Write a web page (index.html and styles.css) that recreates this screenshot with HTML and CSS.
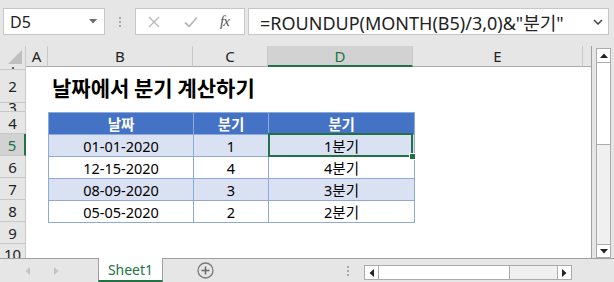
FILE: index.html
```html
<!DOCTYPE html>
<html>
<head>
  <meta charset="utf-8">
  <title>날짜에서 분기 계산하기</title>
  <link rel="stylesheet" href="styles.css">
</head>
<body>
<div class="app">

  <div class="fbar">
    <div class="namebox">
      <span>D5</span>
      <svg class="caret" width="8" height="5" viewBox="0 0 8 5"><path d="M0 0H8L4 4.5Z" fill="#6b6b6b"/></svg>
    </div>
    <div class="grip"><i></i><i></i><i></i></div>
    <div class="fxbox">
      <svg width="12" height="12" viewBox="0 0 12 12"><path d="M1 1L11 11M11 1L1 11" stroke="#b8b8b8" stroke-width="1.4"/></svg>
      <svg width="14" height="12" viewBox="0 0 14 12"><path d="M1 6.5L5 10.5L13 1.5" stroke="#b8b8b8" stroke-width="1.8" fill="none"/></svg>
      <span class="fx">fx</span>
    </div>
    <div class="formula">
      <span>=ROUNDUP(MONTH(B5)/3,0)&amp;"분기"</span>
      <svg width="10" height="6" viewBox="0 0 10 6"><path d="M1 1L5 5L9 1" stroke="#444" stroke-width="1.5" fill="none"/></svg>
    </div>
  </div>

  <div class="main">
    <div class="sheet">
      <div class="corner"><span class="tri"></span></div>
      <div class="colhead">A</div>
      <div class="colhead">B</div>
      <div class="colhead">C</div>
      <div class="colhead sel">D</div>
      <div class="colhead">E</div>
      <div class="colhead rest"></div>

      <div class="rowhead"><span>1</span></div>
      <div class="rowhead"><span>2</span></div>
      <div class="rowhead"><span>3</span></div>
      <div class="rowhead"><span>4</span></div>
      <div class="rowhead sel"><span>5</span></div>
      <div class="rowhead"><span>6</span></div>
      <div class="rowhead"><span>7</span></div>
      <div class="rowhead"><span>8</span></div>
      <div class="rowhead"><span>9</span></div>
      <div class="rowhead last"><span>10</span></div>

      <div class="canvas"></div>
      <div class="title">날짜에서 분기 계산하기</div>

      <table class="data">
        <colgroup><col class="c-date"><col class="c-q"><col class="c-res"></colgroup>
        <tr class="head"><td>날짜</td><td>분기</td><td>분기</td></tr>
        <tr class="band"><td>01-01-2020</td><td>1</td><td>1분기</td></tr>
        <tr><td>12-15-2020</td><td>4</td><td>4분기</td></tr>
        <tr class="band"><td>08-09-2020</td><td>3</td><td>3분기</td></tr>
        <tr><td>05-05-2020</td><td>2</td><td>2분기</td></tr>
      </table>

      <div class="cursor"></div>
    </div>

    <div class="vscroll">
      <div class="sbtn"><svg width="8" height="5" viewBox="0 0 8 5"><path d="M0 5H8L4 0.5Z" fill="#222"/></svg></div>
      <div class="vthumb"></div>
      <div class="track"></div>
      <div class="sbtn"><svg width="8" height="5" viewBox="0 0 8 5"><path d="M0 0H8L4 4.5Z" fill="#222"/></svg></div>
    </div>
  </div>

  <div class="tabbar">
    <div class="navs">
      <svg width="5" height="8" viewBox="0 0 5 8"><path d="M5 0V8L0.5 4Z" fill="#c4c4c4"/></svg>
      <svg width="5" height="8" viewBox="0 0 5 8"><path d="M0 0V8L4.5 4Z" fill="#c4c4c4"/></svg>
    </div>
    <div class="tab">Sheet1</div>
    <div class="addsheet">
      <svg width="17" height="17" viewBox="0 0 17 17"><circle cx="8.5" cy="8.5" r="7.5" stroke="#7a7a7a" stroke-width="1.3" fill="none"/><path d="M8.5 4.5V12.5M4.5 8.5H12.5" stroke="#6a6a6a" stroke-width="1.5"/></svg>
    </div>
    <div class="hgrip"><i></i><i></i><i></i></div>
    <div class="hscroll">
      <div class="sbtn"><svg width="5" height="8" viewBox="0 0 5 8"><path d="M5 0V8L0.5 4Z" fill="#222"/></svg></div>
      <div class="hthumb"></div>
      <div class="track"></div>
      <div class="sbtn"><svg width="5" height="8" viewBox="0 0 5 8"><path d="M0 0V8L4.5 4Z" fill="#222"/></svg></div>
    </div>
  </div>

</div>
</body>
</html>
```

FILE: styles.css
```css
body{
      margin: 0;
      font-family: "Noto Sans", "Noto Sans CJK KR", sans-serif;
      color: #000;
}
.app{
      width: 614px;
      height: 282px;
      background: #e6e6e6;
      display: flex;
      flex-direction: column;
      overflow: hidden;
}

/* formula bar */
.fbar{
      height: 46px;
      box-sizing: border-box;
      padding: 8px 5px 0 3px;
      display: flex;
      align-items: flex-start;
}
.fbar > div{height: 27px; box-sizing: border-box;}
.namebox{
      width: 102px;
      background: #fff;
      border: 1px solid #c6c6c6;
      display: flex;
      align-items: center;
      justify-content: space-between;
      padding: 0 7px 0 6px;
      font-size: 16px;
      color: #222;
}
.grip{
      width: 30px;
      display: flex;
      flex-direction: column;
      align-items: center;
      justify-content: center;
      gap: 2px;
}
.grip i, .hgrip i{display: block; width: 2px; height: 2px; background: #a8a8a8;}
.fxbox{
      width: 110px;
      background: #fff;
      border: 1px solid #c6c6c6;
      display: flex;
      align-items: center;
      padding-left: 12px;
      gap: 24px;
}
.fx{
      font-family: "Liberation Serif", serif;
      font-style: italic;
      font-size: 15px;
      color: #555;
      letter-spacing: -1px;
      margin-left: -2px;
}
.formula{
      flex: 1;
      margin-left: 3px;
      background: #fff;
      border: 1px solid #c6c6c6;
      display: flex;
      align-items: center;
      justify-content: space-between;
      padding: 0 5px 0 11px;
      font-size: 18px;
      color: #222;
}

/* sheet */
.main{display: flex; height: 212px;}
.sheet{
      width: 592px;
      display: grid;
      grid-template-columns: 26px 22px 145px 75px 145px 170px 9px;
      grid-template-rows: 21px 3px 33px 9px 22px 22px 22px 22px 22px 22px 14px;
      font-size: 14.5px;
}
.corner{
      grid-area: 1 / 1;
      border-right: 1px solid #c8c8c8;
      position: relative;
}
.tri{
      position: absolute;
      right: 3px;
      bottom: 3px;
      width: 0;
      height: 0;
      border-left: 14px solid transparent;
      border-bottom: 14px solid #bfbfbf;
}
.colhead{
      grid-row: 1;
      display: flex;
      align-items: center;
      justify-content: center;
      border-right: 1px solid #c8c8c8;
      border-bottom: 1px solid #ababab;
      font-size: 15px;
      color: #222;
}
.colhead.sel{background: #d2d2d2; color: #217346; border-bottom: 2px solid #217346;}
.colhead.rest{border-right: 1px solid #a0a0a0;}
.rowhead{
      grid-column: 1;
      border-bottom: 1px solid #c8c8c8;
      border-right: 1px solid #c8c8c8;
      overflow: hidden;
      display: flex;
      align-items: center;
      justify-content: center;
      font-size: 15px;
      color: #222;
}
.rowhead.sel{background: #d2d2d2; color: #217346; border-right: 2px solid #217346;}
.rowhead.last{border-bottom: none; align-items: flex-start;}
.canvas{
      grid-column: 2 / 8;
      grid-row: 2 / 12;
      background: #fff;
      border-right: 1px solid #a0a0a0;
}
.title{
      grid-column: 3 / 7;
      grid-row: 3;
      align-self: center;
      padding: 0 0 0 4px;
      font-family: "Noto Sans CJK KR", sans-serif;
      font-weight: bold;
      font-size: 21px;
}

.data{
      grid-column: 3 / 6;
      grid-row: 5 / 10;
      width: 366px;
      border-collapse: collapse;
      table-layout: fixed;
      align-self: start;
}
.c-date{width: 145px;}
.c-q{width: 75px;}
.c-res{width: 146px;}
.data td{
      height: 21px;
      padding: 0;
      border: 1px solid #8eaadb;
      text-align: center;
      line-height: 20px;
}
.data .head td{background: #4472c4; color: #fff; font-weight: bold; font-family: "Noto Sans CJK KR", sans-serif;}
.data .band td{background: #d9e1f2;}
.cursor{
      grid-column: 5;
      grid-row: 6;
      margin: -1px 0 -1px 0;
      border: 2px solid #217346;
      position: relative;
}
.cursor::after{
      content: "";
      position: absolute;
      right: -5px;
      bottom: -5px;
      width: 5px;
      height: 5px;
      background: #217346;
      border: 1px solid #fff;
}

/* scroll bars */
.vscroll{
      width: 15px;
      margin-left: 4px;
      padding-top: 2px;
      display: flex;
      flex-direction: column;
      background: #e6e6e6;
}
.sbtn{
      background: #fff;
      border: 1px solid #ababab;
      box-sizing: border-box;
      display: flex;
      align-items: center;
      justify-content: center;
}
.vscroll .sbtn{height: 15px;}
.vthumb{height: 81px; background: #fff; border: 1px solid #ababab; border-top: none;}
.vscroll .track{flex: 1; background: #f0f0f0; border-left: 1px solid #ababab; border-right: 1px solid #ababab;}
.vscroll .sbtn:last-child{height: 14px;}

.tabbar{
      height: 24px;
      box-sizing: border-box;
      border-top: 1px solid #a0a0a0;
      display: flex;
      align-items: stretch;
}
.navs{
      width: 98px;
      display: flex;
      align-items: center;
      padding-left: 25px;
      gap: 24px;
      box-sizing: border-box;
}
.tab{
      width: 65px;
      margin-top: -1px;
      background: #fff;
      border-left: 1px solid #a0a0a0;
      border-right: 1px solid #a0a0a0;
      border-bottom: 2px solid #217346;
      box-sizing: border-box;
      display: flex;
      align-items: center;
      justify-content: center;
      font-size: 14px;
      color: #217346;
}
.addsheet{
      width: 85px;
      display: flex;
      align-items: center;
      padding-left: 34px;
      box-sizing: border-box;
}
.hgrip{
      width: 116px;
      display: flex;
      flex-direction: column;
      align-items: flex-end;
      justify-content: center;
      gap: 2px;
      padding-right: 15px;
      box-sizing: border-box;
}
.hscroll{
      width: 208px;
      height: 15px;
      margin-top: 6px;
      display: flex;
}
.hscroll .sbtn{width: 15px;}
.hthumb{width: 130px; background: #fff; border: 1px solid #ababab; border-left: none;}
.hscroll .track{flex: 1; background: #f0f0f0; border-top: 1px solid #ababab; border-bottom: 1px solid #ababab;}
```
